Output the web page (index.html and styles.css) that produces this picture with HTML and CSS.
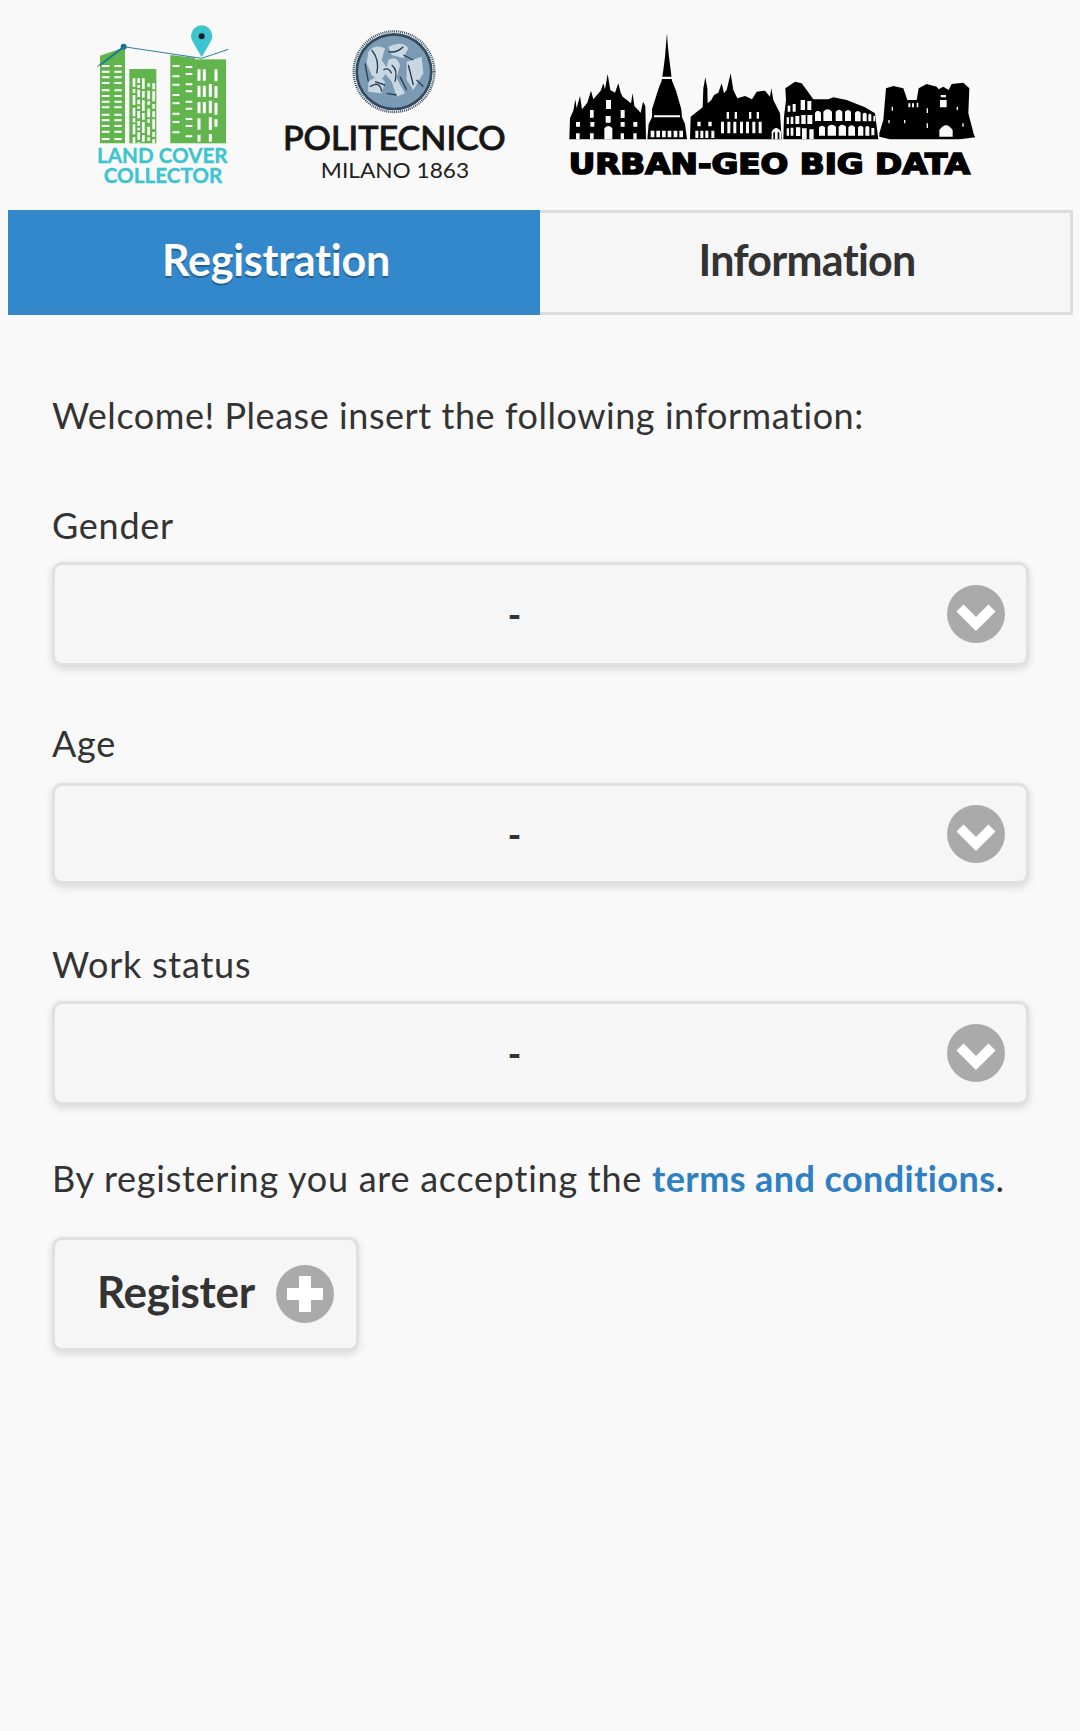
FILE: index.html
```html
<!DOCTYPE html>
<html lang="en">
<head>
<meta charset="utf-8">
<title>Land Cover Collector</title>
<link rel="stylesheet" href="styles.css">
</head>
<body>
<header class="logos">
  <svg class="logo logo-lcc" viewBox="90 30 450 500" role="img" aria-label="Land Cover Collector">
    <g fill="#62b54c">
      <path d="M120 137 L190 113 L195 120 V400 H120 Z"/>
      <rect x="208" y="177" width="81" height="223"/>
      <path d="M331 135 L405 143 V400 H331 Z"/>
      <rect x="405" y="148" width="93" height="252"/>
    </g>
    <g fill="none" stroke="#fff">
      <path stroke-width="23" stroke-dasharray="6 11 6 11 6 11 6 16" d="M137 165 V390"/>
      <path stroke-width="22" stroke-dasharray="6 11 6 11 6 11 6 16" d="M174 165 V390"/>
      <path stroke-width="8" stroke-dasharray="26 6 12 6 30 8" d="M222 205 V400"/>
      <path stroke-width="8" stroke-dasharray="14 6 8 6 22 8" d="M236 205 V400"/>
      <path stroke-width="8" stroke-dasharray="32 6 20 8" d="M250 205 V400"/>
      <path stroke-width="8" stroke-dasharray="10 12 26 6" d="M266 220 V400"/>
      <path stroke-width="8" stroke-dasharray="18 6 30 8 14 8" d="M281 220 V400"/>
      <path stroke-width="21" stroke-dasharray="6 25 6 19" d="M348 165 V385"/>
      <path stroke-width="20" stroke-dasharray="6 15 6 25" d="M387 168 V385"/>
      <path stroke-width="9" stroke-dasharray="34 15" d="M417 178 V395"/>
      <path stroke-width="9" stroke-dasharray="34 15" d="M433 178 V320"/>
      <path stroke-width="9" stroke-dasharray="38 12" d="M451 222 V395"/>
      <path stroke-width="9" stroke-dasharray="36 14" d="M468 178 V350"/>
    </g>
    <path d="M112 170 L190 110 L425 145 L505 118" fill="none" stroke="#2a7f9e" stroke-width="3"/>
    <path d="M120 165 L190 112" fill="none" stroke="#1f7a94" stroke-width="6"/>
    <circle cx="191" cy="110" r="9" fill="#1f6f8e"/>
    <path d="M425 142 L400 98 A32 32 0 1 1 450 98 Z" fill="#3cc4cf"/>
    <circle cx="425" cy="79" r="9" fill="#10212a"/>
    <text class="lcc-text" x="307" y="458" text-anchor="middle" textLength="392" lengthAdjust="spacingAndGlyphs">LAND COVER</text>
    <text class="lcc-text" x="309" y="518" text-anchor="middle" textLength="356" lengthAdjust="spacingAndGlyphs">COLLECTOR</text>
  </svg>

  <svg class="logo logo-polimi" viewBox="660 30 690 490" role="img" aria-label="Politecnico Milano 1863">
    <circle cx="1002" cy="185" r="116" fill="#33495c"/>
    <circle cx="1002" cy="185" r="121" fill="none" stroke="#33495c" stroke-width="7" stroke-dasharray="3 3"/>
    <circle cx="1002" cy="185" r="108" fill="#7b9ab4"/>
    <g fill="#c9d7e3">
      <path d="M925 125 Q945 100 975 115 L965 150 L985 180 L960 215 L935 195 L920 160 Z"/>
      <path d="M985 110 Q1030 90 1045 115 L1030 145 L995 135 Z"/>
      <path d="M985 150 Q1010 135 1020 165 L1010 205 L1035 250 L1010 260 L995 215 L975 190 Z"/>
      <path d="M1040 155 L1085 140 L1090 190 L1060 240 L1040 210 Z"/>
      <path d="M925 215 Q955 190 975 215 L965 250 L925 245 Z"/>
    </g>
    <g fill="none" stroke="#2a3d4f" stroke-width="4">
      <path d="M935 120 Q960 150 950 190 M985 125 Q1010 130 1030 110 M995 165 Q1015 180 1005 215 M1045 165 L1060 225 M930 230 Q960 210 965 245 M980 250 L1010 255 M1030 135 L1060 150"/>
      <path d="M915 160 L925 215 M1070 210 L1090 230 M970 180 Q985 170 995 190 M945 215 L975 225 M1020 200 L1040 240"/>
    </g>
    <text class="polimi-name" x="1003" y="421" text-anchor="middle" textLength="668" lengthAdjust="spacingAndGlyphs">POLITECNICO</text>
    <text class="polimi-sub" x="1005" y="504" text-anchor="middle" textLength="445" lengthAdjust="spacingAndGlyphs">MILANO 1863</text>
  </svg>

  <svg class="logo logo-urban" viewBox="0 0 1320 510" role="img" aria-label="Urban-Geo Big Data">
    <g fill="#000">
      <path d="M58 358 L60 295 L70 272 L76 238 L80 265 L90 228 L96 268 L112 248 L123 212 L130 238 L152 212 L160 190 L165 208 L173 162 L181 210 L195 218 L205 190 L212 218 L218 230 L243 250 L248 220 L253 258 L272 278 L279 245 L286 258 L288 358 Z"/>
      <path d="M292 358 L296 312 L306 292 L306 268 L326 205 L335 182 L340 150 L345 110 L348 72 L351 40 L353 72 L357 110 L362 150 L366 182 L378 212 L394 268 L396 292 L405 312 L411 358 Z"/>
      <path d="M420 358 L422 290 L458 262 L460 205 L466 172 L472 205 L473 250 L484 240 L492 225 L505 218 L515 190 L522 220 L530 210 L542 160 L550 210 L562 235 L585 228 L606 238 L620 215 L645 212 L660 230 L664 205 L670 240 L690 280 L695 358 Z"/>
      <path d="M700 358 L702 290 L708 240 L706 205 L735 185 L755 190 L770 210 L790 238 L835 238 L850 232 L890 240 L945 262 L975 280 L985 358 Z"/>
      <path d="M988 340 L1000 300 L1008 205 L1030 198 L1060 205 L1072 240 L1100 240 L1106 205 L1130 192 L1160 200 L1166 208 L1180 200 L1196 210 L1205 192 L1240 188 L1258 205 L1255 280 L1272 345 L1276 352 L1230 358 L1020 358 L988 350 Z"/>
    </g>
    <g fill="#fafafa">
      <path d="M168 240 h15 v27 h-15 Z M120 270 h11 v23 h-11 Z M212 270 h12 v24 h-12 Z M167 288 h15 v20 h-15 Z M78 306 h12 v14 h-12 Z M121 306 h12 v14 h-12 Z M212 306 h12 v14 h-12 Z M250 306 h12 v14 h-12 Z M78 340 h11 v18 h-11 Z M120 340 h11 v18 h-11 Z M163 325 q12 -14 24 0 v33 h-24 Z M212 340 h10 v18 h-10 Z M250 340 h10 v18 h-10 Z"/>
      <path d="M336 170 h30 v7 h-30 Z M312 286 h78 v6 h-78 Z M302 332 h11 v20 h-11 Z M319 332 h11 v20 h-11 Z M336 332 h11 v20 h-11 Z M353 332 h11 v20 h-11 Z M371 332 h11 v20 h-11 Z M388 332 h11 v20 h-11 Z"/>
      <path d="M436 332 h9 v22 h-9 Z M451 332 h9 v22 h-9 Z M466 332 h9 v22 h-9 Z M484 332 h9 v22 h-9 Z M442 305 h10 v14 h-10 Z M475 305 h10 v14 h-10 Z M513 305 h9 v35 h-9 Z M532 305 h9 v35 h-9 Z M550 305 h9 v35 h-9 Z M570 305 h9 v35 h-9 Z M588 305 h9 v35 h-9 Z M607 305 h9 v35 h-9 Z M626 305 h9 v35 h-9 Z M530 276 h7 v20 h-7 Z M554 276 h7 v20 h-7 Z M597 276 h7 v20 h-7 Z M620 276 h7 v20 h-7 Z M665 335 q13 -22 28 0 v22 h-5 v-20 h-5 v20 h-8 v-20 h-5 v20 h-5 Z"/>
      <path d="M713 257 h8 v18 h-8 Z M728 252 h9 v23 h-9 Z M752 240 h13 v30 h-13 Z M772 243 h12 v27 h-12 Z M710 292 h7 v20 h-7 Z M722 290 h8 v22 h-8 Z M736 288 h12 v24 h-12 Z M754 285 h13 v27 h-13 Z M772 285 h15 v27 h-15 Z M710 325 h7 v22 h-7 Z M722 323 h8 v24 h-8 Z M738 322 h13 v26 h-13 Z M756 325 h14 v33 h-14 Z M778 328 h13 v30 h-13 Z"/>
      <path d="M795 278 q8 -12 18 0 v25 h-18 Z M820 275 q12 -14 26 0 v28 h-26 Z M857 275 q10 -12 20 0 v28 h-20 Z M885 275 q9 -10 18 0 v28 h-18 Z M915 278 q8 -10 17 0 v26 h-17 Z M938 282 q6 -8 12 0 v22 h-12 Z M955 284 q4 -5 9 0 v20 h-9 Z M970 288 h6 v16 h-6 Z M807 322 q9 -10 18 0 v25 h-18 Z M833 320 q12 -12 25 0 v27 h-25 Z M866 320 q11 -12 22 0 v27 h-22 Z M895 322 q10 -12 20 0 v25 h-20 Z M924 322 q8 -10 16 0 v25 h-16 Z M946 322 q6 -8 12 0 v25 h-12 Z M964 324 h9 v22 h-9 Z"/>
      <path d="M1170 240 h20 v22 h-20 Z M1172 225 h16 v7 h-16 Z M1168 330 q20 -28 40 0 v20 h-40 Z M1075 250 h6 v12 h-6 Z M1086 250 h6 v12 h-6 Z M1100 248 h5 v14 h-5 Z M1130 265 h4 v14 h-4 Z M1130 310 h4 v14 h-4 Z M1025 260 h4 v12 h-4 Z M1015 300 h4 v10 h-4 Z M1062 300 h4 v10 h-4 Z M1220 260 h4 v10 h-4 Z M1237 310 h4 v10 h-4 Z"/>
    </g>
    <text class="urban-text" x="658" y="462" text-anchor="middle" textLength="1204" lengthAdjust="spacingAndGlyphs">URBAN-GEO BIG DATA</text>
  </svg>
</header>

<nav class="tabs">
  <a class="tab tab-active">Registration</a>
  <a class="tab tab-plain">Information</a>
</nav>

<main class="content">
  <p class="intro">Welcome! Please insert the following information:</p>

  <div class="field field-gender">
    <label class="field-label">Gender</label>
    <div class="select">
      <span class="select-value">-</span>
      <svg class="badge" viewBox="0 0 58 58"><circle cx="29" cy="29" r="29" fill="#aaa"/><path d="M13 23 L29 39 L45 23" fill="none" stroke="#fff" stroke-width="10"/></svg>
    </div>
  </div>

  <div class="field field-age">
    <label class="field-label">Age</label>
    <div class="select">
      <span class="select-value">-</span>
      <svg class="badge" viewBox="0 0 58 58"><circle cx="29" cy="29" r="29" fill="#aaa"/><path d="M13 23 L29 39 L45 23" fill="none" stroke="#fff" stroke-width="10"/></svg>
    </div>
  </div>

  <div class="field field-work">
    <label class="field-label">Work status</label>
    <div class="select">
      <span class="select-value">-</span>
      <svg class="badge" viewBox="0 0 58 58"><circle cx="29" cy="29" r="29" fill="#aaa"/><path d="M13 23 L29 39 L45 23" fill="none" stroke="#fff" stroke-width="10"/></svg>
    </div>
  </div>

  <p class="terms">By registering you are accepting the <a class="terms-link">terms and conditions</a>.</p>

  <button class="register" type="button">
    <span class="register-label">Register</span>
    <svg class="badge-inline" viewBox="0 0 58 58"><circle cx="29" cy="29" r="29" fill="#aaa"/><path d="M29 11 V47 M11 29 H47" fill="none" stroke="#fff" stroke-width="12"/></svg>
  </button>
</main>
</body>
</html>
```

FILE: styles.css
```css
* { box-sizing: border-box; }

html, body {
  margin: 0;
  padding: 0;
}

body {
  width: 1080px;
  height: 1731px;
  overflow: hidden;
  background: #f9f9f9;
  color: #333;
  font-family: "Lato", "Noto Sans", sans-serif;
}

.logos {
  display: flex;
  align-items: flex-start;
  gap: 40px;
  height: 210px;
  padding: 20px 0 0 90px;
}

.logo { display: block; flex: none; }
.logo-lcc { width: 150px; height: 166.67px; }
.logo-polimi { width: 230px; height: 163.33px; }
.logo-urban { width: 440px; height: 170px; }

.lcc-text {
  font: 700 61px "Lato", sans-serif;
  fill: #3cc4cf;
  stroke: #3cc4cf;
  stroke-width: 1px;
}
.polimi-name {
  font: 500 96px "Lato", sans-serif;
  fill: #161616;
  stroke: #161616;
  stroke-width: 2.5px;
}
.polimi-sub {
  font: 400 62px "Lato", sans-serif;
  fill: #222;
}
.urban-text {
  font: 700 86px "DejaVu Sans", sans-serif;
  fill: #000;
  stroke: #000;
  stroke-width: 5px;
}

.tabs {
  display: flex;
  margin: 0 7px 0 8px;
  height: 105px;
}

.tab {
  flex: 1 1 0;
  display: flex;
  align-items: center;
  justify-content: center;
  padding: 0 0 6px 4px;
  background: #f6f6f6;
  border: 3px solid #ddd;
  border-left: 0;
  font-size: 43px;
  font-weight: 700;
  letter-spacing: -0.25px;
  color: #333;
}

.tab-plain {
  letter-spacing: -0.75px;
}

.tab-active {
  flex: 0 0 532px;
  background: #3388cc;
  border: 0;
  color: #fff;
  text-shadow: 0 2px 0 #1f5f94;
}

.content {
  padding: 0 51px 0 52px;
}

.intro {
  margin: 0;
  padding-top: 77px;
  font-size: 36px;
  line-height: 46px;
  letter-spacing: 0.55px;
}

.field { margin: 0; }
.field-gender { padding-top: 64px; }
.field-age { padding-top: 54px; }
.field-work { padding-top: 57px; }

.field-label {
  display: block;
  font-size: 36px;
  line-height: 46px;
  letter-spacing: 0.75px;
}

.select {
  position: relative;
  display: flex;
  align-items: center;
  justify-content: center;
  height: 104px;
  margin-top: 14px;
  padding-right: 52px;
  background: #f6f6f6;
  border: 3px solid #e0e0e0;
  border-radius: 10px;
  box-shadow: 0 3px 9px rgba(0, 0, 0, .14);
}
.field-age .select { height: 101px; margin-top: 17px; }
.field-work .select { height: 104px; margin-top: 14px; }

.select-value {
  font-size: 36px;
  font-weight: 900;
}

.badge {
  position: absolute;
  right: 21px;
  top: 50%;
  width: 58px;
  height: 58px;
  margin-top: -29px;
}

.terms {
  margin: 0;
  padding-top: 50px;
  font-size: 36px;
  line-height: 46px;
  letter-spacing: 0.75px;
}

.terms-link {
  color: #2f80c2;
  font-weight: 700;
  letter-spacing: 0.4px;
}

.register {
  display: flex;
  align-items: center;
  gap: 21px;
  width: 307px;
  height: 114px;
  margin-top: 36px;
  padding: 0 0 0 42px;
  background: #f6f6f6;
  border: 3px solid #e0e0e0;
  border-radius: 10px;
  box-shadow: 0 3px 9px rgba(0, 0, 0, .14);
  font-family: inherit;
  font-size: 44px;
  font-weight: 700;
  letter-spacing: -0.3px;
  color: #333;
}

.register-label {
  margin-bottom: 6px;
}

.badge-inline {
  width: 58px;
  height: 58px;
  flex: none;
}
```
